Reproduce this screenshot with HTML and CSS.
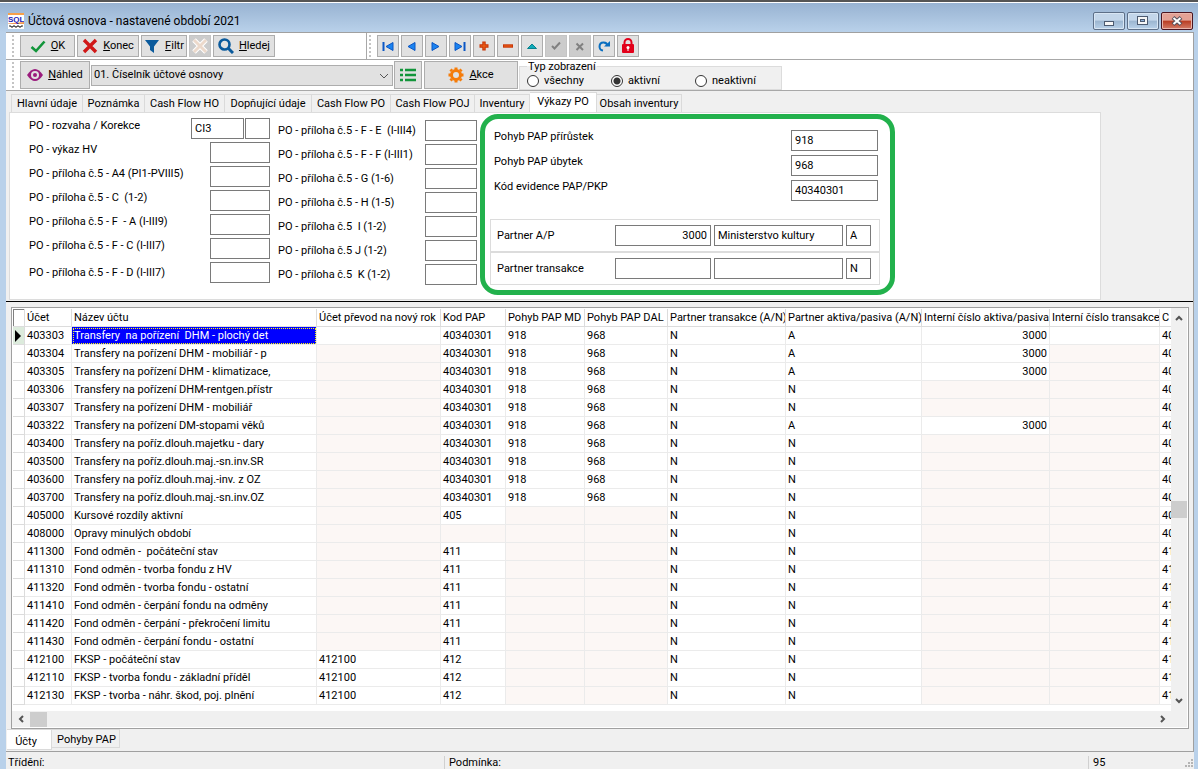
FILE: index.html
```html
<!DOCTYPE html>
<html lang="cs">
<head>
<meta charset="utf-8">
<title>Účtová osnova</title>
<link rel="stylesheet" href="styles.css">
</head>
<body>
<div class="window">
<header class="titlebar">
  <svg class="logo" viewBox="0 0 16 16"><rect width="16" height="16" fill="#fff"/><rect width="16" height="2" fill="#f6a04a"/><path d="M0 10.500L16 9V11H0Z" fill="#f29a50"/><text x="0" y="9" font-size="8" font-weight="bold" fill="#1b1bb5">SQL</text><path d="M1 13h2v1h2v-1h2v1h2v-1h2v1h2v-1h2" stroke="#222" fill="none"/></svg>
  <h1 class="title">Účtová osnova - nastavené období 2021</h1>
  <div class="winbuttons">
    <button class="winbtn" aria-label="Minimalizovat"><svg width="12" height="12"><rect x="1.500" y="6.500" width="9" height="4" fill="#f6f6f6" stroke="#4c5a70"/></svg></button>
    <button class="winbtn" aria-label="Maximalizovat"><svg width="12" height="12"><rect x=".5" y="1.500" width="10" height="8" fill="#f6f6f6" stroke="#4c5a70"/><rect x="3.500" y="4.500" width="4" height="2" fill="#8fb0d8" stroke="#4c5a70"/></svg></button>
    <button class="winbtn winbtn-close" aria-label="Zavřít"><svg width="12" height="12"><path d="M2 2.500L10 9.500M10 2.500L2 9.500" stroke="#55505c" stroke-width="4"/><path d="M2.500 3L9.500 9M9.500 3L2.500 9" stroke="#fff" stroke-width="2"/></svg></button>
  </div>
</header>

<main class="client">
<div class="toolbar toolbar-main">
  <div class="band band-actions">
    <span class="grip"></span>
    <button class="btn btn-ok"><svg width="16" height="16"><path d="M1.500 9L6 13L14.500 3.500" fill="none" stroke="#12953a" stroke-width="2.600"/></svg><span><u>O</u>K</span></button>
    <button class="btn btn-konec"><svg width="16" height="16"><path d="M2 2L14 14M14 2L2 14" stroke="#d01818" stroke-width="3.400"/></svg><span><u>K</u>onec</span></button>
    <button class="btn btn-filtr"><svg width="16" height="16"><path d="M1 2H15L10 8.500V15L6 12V8.500Z" fill="#0a5a9c"/></svg><span><u>F</u>iltr</span></button>
    <button class="btn btn-clear" disabled aria-label="Zrušit filtr"><svg width="16" height="16"><path d="M2 2L14 14M14 2L2 14" stroke="#fff" stroke-width="5"/><path d="M2 2L14 14M14 2L2 14" stroke="#ecd9cb" stroke-width="3"/></svg></button>
    <button class="btn btn-hledej"><svg width="16" height="16"><circle cx="6.500" cy="6.500" r="5" fill="none" stroke="#0a5a9c" stroke-width="2.600"/><path d="M10.500 10.500L15 15" stroke="#0a5a9c" stroke-width="3"/></svg><span><u>H</u>ledej</span></button>
  </div>
  <div class="band band-nav">
    <span class="grip"></span>
    <button class="btn nav" aria-label="První"><svg width="14" height="14"><path d="M2.500 3V12" stroke="#0b56c4" stroke-width="2"/><path d="M12 3.500V11.500L5 7.500Z" fill="#1b83f0" stroke="#0b56c4"/></svg></button>
    <button class="btn nav" aria-label="Předchozí"><svg width="14" height="14"><path d="M10 3.500V11.500L3 7.500Z" fill="#1b83f0" stroke="#0b56c4"/></svg></button>
    <button class="btn nav" aria-label="Další"><svg width="14" height="14"><path d="M3 3.500V11.500L10 7.500Z" fill="#1b83f0" stroke="#0b56c4"/></svg></button>
    <button class="btn nav" aria-label="Poslední"><svg width="14" height="14"><path d="M11.500 3V12" stroke="#0b56c4" stroke-width="2"/><path d="M2 3.500V11.500L9 7.500Z" fill="#1b83f0" stroke="#0b56c4"/></svg></button>
    <button class="btn nav" aria-label="Přidat"><svg width="14" height="14"><path d="M7 2.500V11.500M2.500 7H11.500" stroke="#c93404" stroke-width="3.400"/><path d="M7 3.500V10.500M3.500 7H10.500" stroke="#f0661c"/></svg></button>
    <button class="btn nav" aria-label="Smazat"><svg width="14" height="14"><path d="M2 7H12" stroke="#c93404" stroke-width="3.400"/><path d="M3 7H11" stroke="#f0661c"/></svg></button>
    <button class="btn nav" aria-label="Upravit"><svg width="14" height="14"><path d="M7 5L11.500 9.500H2.500Z" fill="#10aab8" stroke="#08828f"/></svg></button>
    <button class="btn nav" disabled aria-label="Uložit"><svg width="14" height="14"><path d="M3 7L5.500 9.500L11 3.500" fill="none" stroke="#808080" stroke-width="2"/></svg></button>
    <button class="btn nav" disabled aria-label="Storno"><svg width="14" height="14"><path d="M3.500 4.500L10 11M10 4.500L3.500 11" stroke="#808080" stroke-width="2"/></svg></button>
    <button class="btn nav" aria-label="Obnovit"><svg width="14" height="14"><path d="M6 11.500A4 4 0 1 1 10.500 7" fill="none" stroke="#0b6fc0" stroke-width="2"/><path d="M7 7.500H13V2Z" fill="#0b6fc0"/></svg></button>
    <button class="btn nav" aria-label="Zamknout"><svg width="16" height="18"><path d="M4.500 8V5.500a3.500 3.500 0 0 1 7 0V8" fill="none" stroke="#e2001a" stroke-width="2"/><rect x="2" y="7" width="12" height="9" rx="1" fill="#e2001a"/><circle cx="8" cy="10.500" r="1.500" fill="#fff"/><path d="M8 11V14" stroke="#fff"/></svg></button>
  </div>
</div>

<div class="toolbar toolbar-view">
  <span class="grip"></span>
  <button class="btn btn-nahled"><svg width="16" height="16"><path d="M0 8Q8-4 16 8Q8 20 0 8Z" fill="#9b1b7d"/><circle cx="8" cy="8" r="4" fill="#e1e1e1"/><circle cx="8" cy="8" r="2" fill="#9b1b7d"/></svg><span><u>N</u>áhled</span></button>
  <div class="combo">
    <select class="combo-select" aria-label="Sestava"><option>01. Číselník účtové osnovy</option></select>
    <svg class="combo-arrow" width="10" height="6"><path d="M1 1L5 5L9 1" fill="none" stroke="#555"/></svg>
  </div>
  <button class="btn btn-list" aria-label="Seznam"><svg width="16" height="14"><path d="M0 2H3M5 2H16M0 7H3M5 7H16M0 12H3M5 12H16" stroke="#12953a" stroke-width="2.400"/></svg></button>
  <button class="btn btn-akce"><svg width="16" height="16" viewBox="-8 -8 16 16"><circle r="4.500" fill="none" stroke="#f57c0a" stroke-width="3"/><path d="M0-7.500V-5M0 7.500V5M-7.500 0H-5M7.500 0H5M-5.500-5.500L-4-4M5.500 5.500L4 4M-5.500 5.500L-4 4M5.500-5.500L4-4" stroke="#f57c0a" stroke-width="3"/></svg><span><u>A</u>kce</span></button>
  <fieldset class="view-type">
    <legend>Typ zobrazení</legend>
    <label><input type="radio" name="typ">všechny</label>
    <label><input type="radio" name="typ" checked>aktivní</label>
    <label><input type="radio" name="typ">neaktivní</label>
  </fieldset>
</div>

<nav class="tabs">
  <button class="tab tab-1">Hlavní údaje</button><button class="tab tab-2">Poznámka</button><button class="tab tab-3">Cash Flow HO</button><button class="tab tab-4">Dopňující údaje</button><button class="tab tab-5">Cash Flow PO</button><button class="tab tab-6">Cash Flow POJ</button><button class="tab tab-7">Inventury</button><button class="tab tab-8 active">Výkazy PO</button><button class="tab tab-9">Obsah inventury</button>
</nav>

<section class="page">
  <div class="fields fields-left">
    <div class="field"><label for="l1">PO - rozvaha / Korekce</label><span class="pair"><input id="l1" value="CI3"><input aria-label="Korekce"></span></div>
    <div class="field"><label for="l2">PO - výkaz HV</label><input id="l2"></div>
    <div class="field"><label for="l3">PO - příloha č.5 - A4 (PI1-PVIII5)</label><input id="l3"></div>
    <div class="field"><label for="l4">PO - příloha č.5 - C&nbsp; (1-2)</label><input id="l4"></div>
    <div class="field"><label for="l5">PO - příloha č.5 - F&nbsp; - A (I-III9)</label><input id="l5"></div>
    <div class="field"><label for="l6">PO - příloha č.5 - F - C (I-III7)</label><input id="l6"></div>
    <div class="field field-last"><label for="l7">PO - příloha č.5 - F - D (I-III7)</label><input id="l7"></div>
  </div>
  <div class="fields fields-mid">
    <div class="field"><label for="m1">PO - příloha č.5 - F - E&nbsp; (I-III4)</label><input id="m1"></div>
    <div class="field"><label for="m2">PO - příloha č.5 - F - F (I-III1)</label><input id="m2"></div>
    <div class="field"><label for="m3">PO - příloha č.5 - G (1-6)</label><input id="m3"></div>
    <div class="field"><label for="m4">PO - příloha č.5 - H (1-5)</label><input id="m4"></div>
    <div class="field"><label for="m5">PO - příloha č.5&nbsp; I (1-2)</label><input id="m5"></div>
    <div class="field"><label for="m6">PO - příloha č.5 J (1-2)</label><input id="m6"></div>
    <div class="field"><label for="m7">PO - příloha č.5&nbsp; K (1-2)</label><input id="m7"></div>
  </div>
  <div class="pap">
    <div class="pap-fields">
      <div class="field"><label for="p1">Pohyb PAP přírůstek</label><input id="p1" value="918"></div>
      <div class="field"><label for="p2">Pohyb PAP úbytek</label><input id="p2" value="968"></div>
      <div class="field"><label for="p3">Kód evidence PAP/PKP</label><input id="p3" value="40340301"></div>
    </div>
    <div class="partner"><label for="a1">Partner A/P</label><input class="num" id="a1" value="3000"><input aria-label="Název partnera" value="Ministerstvo kultury"><input aria-label="Příznak A/P" value="A"></div>
    <div class="partner"><label for="t1">Partner transakce</label><input class="num" id="t1"><input aria-label="Název partnera transakce"><input aria-label="Příznak transakce" value="N"></div>
  </div>
</section>

<section class="grid">
  <div class="grid-view">
  <table class="accounts">
    <colgroup><col class="c0"><col class="c1"><col class="c2"><col class="c3"><col class="c4"><col class="c5"><col class="c6"><col class="c7"><col class="c8"><col class="c9"><col class="c10"><col class="c11"></colgroup>
    <thead><tr><th></th><th>Účet</th><th>Název účtu</th><th>Účet převod na nový rok</th><th>Kod PAP</th><th>Pohyb PAP MD</th><th>Pohyb PAP DAL</th><th>Partner transakce (A/N)</th><th>Partner aktiva/pasiva (A/N)</th><th>Interní číslo aktiva/pasiva</th><th>Interní číslo transakce</th><th>C</th></tr></thead>
    <tbody>
    <tr class="current"><td><svg width="6" height="12"><path d="M0 0L6 6L0 12Z"/></svg></td><td>403303</td><td>Transfery&nbsp; na pořízení&nbsp; DHM - plochý det</td><td></td><td>40340301</td><td>918</td><td>968</td><td>N</td><td>A</td><td>3000</td><td></td><td>40</td></tr>
    <tr><td></td><td>403304</td><td>Transfery na pořízení DHM - mobiliář - p</td><td></td><td>40340301</td><td>918</td><td>968</td><td>N</td><td>A</td><td>3000</td><td></td><td>40</td></tr>
    <tr><td></td><td>403305</td><td>Transfery na pořízení DHM - klimatizace,</td><td></td><td>40340301</td><td>918</td><td>968</td><td>N</td><td>A</td><td>3000</td><td></td><td>40</td></tr>
    <tr><td></td><td>403306</td><td>Transfery na pořízení DHM-rentgen.přístr</td><td></td><td>40340301</td><td>918</td><td>968</td><td>N</td><td>N</td><td></td><td></td><td>40</td></tr>
    <tr><td></td><td>403307</td><td>Transfery na pořízení DHM - mobiliář</td><td></td><td>40340301</td><td>918</td><td>968</td><td>N</td><td>N</td><td></td><td></td><td>40</td></tr>
    <tr><td></td><td>403322</td><td>Transfery na pořízení DM-stopami věků</td><td></td><td>40340301</td><td>918</td><td>968</td><td>N</td><td>A</td><td>3000</td><td></td><td>40</td></tr>
    <tr><td></td><td>403400</td><td>Transfery na poříz.dlouh.majetku - dary</td><td></td><td>40340301</td><td>918</td><td>968</td><td>N</td><td>N</td><td></td><td></td><td>40</td></tr>
    <tr><td></td><td>403500</td><td>Transfery na poříz.dlouh.maj.-sn.inv.SR</td><td></td><td>40340301</td><td>918</td><td>968</td><td>N</td><td>N</td><td></td><td></td><td>40</td></tr>
    <tr><td></td><td>403600</td><td>Transfery na poříz.dlouh.maj.-inv. z OZ</td><td></td><td>40340301</td><td>918</td><td>968</td><td>N</td><td>N</td><td></td><td></td><td>40</td></tr>
    <tr><td></td><td>403700</td><td>Transfery na poříz.dlouh.maj.-sn.inv.OZ</td><td></td><td>40340301</td><td>918</td><td>968</td><td>N</td><td>N</td><td></td><td></td><td>40</td></tr>
    <tr><td></td><td>405000</td><td>Kursové rozdíly aktivní</td><td></td><td>405</td><td></td><td></td><td>N</td><td>N</td><td></td><td></td><td>40</td></tr>
    <tr><td></td><td>408000</td><td>Opravy minulých období</td><td></td><td></td><td></td><td></td><td>N</td><td>N</td><td></td><td></td><td>40</td></tr>
    <tr><td></td><td>411300</td><td>Fond odměn -&nbsp; počáteční stav</td><td></td><td>411</td><td></td><td></td><td>N</td><td>N</td><td></td><td></td><td>41</td></tr>
    <tr><td></td><td>411310</td><td>Fond odměn - tvorba fondu z HV</td><td></td><td>411</td><td></td><td></td><td>N</td><td>N</td><td></td><td></td><td>41</td></tr>
    <tr><td></td><td>411320</td><td>Fond odměn - tvorba fondu - ostatní</td><td></td><td>411</td><td></td><td></td><td>N</td><td>N</td><td></td><td></td><td>41</td></tr>
    <tr><td></td><td>411410</td><td>Fond odměn - čerpání fondu na odměny</td><td></td><td>411</td><td></td><td></td><td>N</td><td>N</td><td></td><td></td><td>41</td></tr>
    <tr><td></td><td>411420</td><td>Fond odměn - čerpání - překročení limitu</td><td></td><td>411</td><td></td><td></td><td>N</td><td>N</td><td></td><td></td><td>41</td></tr>
    <tr><td></td><td>411430</td><td>Fond odměn - čerpání fondu - ostatní</td><td></td><td>411</td><td></td><td></td><td>N</td><td>N</td><td></td><td></td><td>41</td></tr>
    <tr><td></td><td>412100</td><td>FKSP - počáteční stav</td><td>412100</td><td>412</td><td></td><td></td><td>N</td><td>N</td><td></td><td></td><td>41</td></tr>
    <tr><td></td><td>412110</td><td>FKSP - tvorba fondu - základní příděl</td><td>412100</td><td>412</td><td></td><td></td><td>N</td><td>N</td><td></td><td></td><td>41</td></tr>
    <tr><td></td><td>412130</td><td>FKSP - tvorba - náhr. škod, poj. plnění</td><td>412100</td><td>412</td><td></td><td></td><td>N</td><td>N</td><td></td><td></td><td>41</td></tr>
    </tbody>
  </table>
  </div>
  <div class="vscroll"><svg width="8" height="6"><path d="M1 5L4 2L7 5" fill="none" stroke="#555" stroke-width="2"/></svg><span class="vspace"></span><span class="thumb"></span><span class="vrest"></span><svg width="8" height="6"><path d="M1 1L4 4L7 1" fill="none" stroke="#555" stroke-width="2"/></svg></div>
  <div class="hscroll"><svg width="6" height="8"><path d="M5 1L2 4L5 7" fill="none" stroke="#555" stroke-width="2"/></svg><span class="thumb"></span><span class="hrest"></span><svg width="6" height="8"><path d="M1 1L4 4L1 7" fill="none" stroke="#555" stroke-width="2"/></svg></div>
</section>

<nav class="bottom-tabs"><button class="btab active">Účty</button><button class="btab">Pohyby PAP</button></nav>
</main>

<footer class="status"><span class="st-sort">Třídění:</span><span class="st-cond">Podmínka:</span><span class="st-count">95</span>
  <svg class="sizer" width="10" height="10"><path d="M7 1h2M4 4h2M7 4h2M1 7h2M4 7h2M7 7h2" stroke="#b4b4b4" stroke-width="2"/></svg></footer>
</div>
</body>
</html>
```
FILE: styles.css
```css
* { box-sizing: border-box; }

body {
  margin: 0;
  height: 100vh;
  overflow: hidden;
  background: #b9d1ea;
  color: #000;
  font: 11px/14px Roboto, "Liberation Sans", sans-serif;
}

button, input, select, legend, fieldset { font: inherit; color: inherit; }
button { padding: 0; }
svg { display: block; flex: none; }

.window {
  display: flex;
  flex-direction: column;
  height: 100vh;
  padding: 0 4px 0 6px;
  border-top: 2px solid #555;
}

/* Title bar */
.titlebar {
  display: flex;
  align-items: center;
  height: 30px;
  flex: none;
  margin: 0 -4px 0 -6px;
  padding: 6px 5px 0 8px;
  border-top: 1px solid #fff;
  background: linear-gradient(#98b3d2, #b9d1ea);
}
.logo { width: 16px; height: 16px; font-family: "Liberation Sans", sans-serif; }
.title {
  flex: 1;
  margin: 0 0 0 4px;
  font: 12px/16px Roboto, "Noto Sans", sans-serif;
}
.winbuttons { display: flex; gap: 2px; }
.winbtn {
  display: flex;
  align-items: center;
  justify-content: center;
  width: 32px;
  height: 18px;
  border: 1px solid #5d6f88;
  border-radius: 2px;
  background: linear-gradient(#c3d6ea 45%, #9bb5d0 50%, #b9d1ea);
  box-shadow: inset 0 0 0 1px #d8e6f4;
}
.winbtn-close {
  border-color: #4a1420;
  background: linear-gradient(#e3a195 45%, #b93c22 50%, #d47c68);
  box-shadow: inset 0 0 0 1px #e9b5ab;
}

/* Toolbars */
.client {
  display: flex;
  flex-direction: column;
  flex: 1;
  min-height: 0;
  background: #f0f0f0;
  border-top: 1px solid #a0a0a0;
  border-right: 1px solid #a0a0a0;
}
.toolbar { display: flex; flex: none; background: #fff; border-bottom: 1px solid #a8a8a8; }
.toolbar-main { height: 27px; }
.band { display: flex; align-items: center; gap: 2px; }
.band-actions { width: 361px; border-right: 1px solid #a8a8a8; }
.band-nav { margin-left: 1px; }
.grip {
  width: 2px;
  height: 22px;
  margin: 0 4px 0 6px;
  background: repeating-linear-gradient(#c4c4c4 0 2px, #fff 2px 4px);
}
.band-nav .grip { margin: 0 4px 0 1px; }
.btn {
  display: flex;
  align-items: center;
  justify-content: center;
  gap: 5px;
  height: 22px;
  border: 1px solid #adadad;
  background: #e1e1e1;
}
.btn:disabled { background: #ccc; border-color: #c4c4c4; }
.btn-ok { width: 55px; }
.btn-konec { width: 62px; }
.btn-filtr { width: 46px; }
.btn-clear { width: 22px; }
.btn-hledej { width: 62px; }
.nav { width: 22px; }

.toolbar-view { height: 31px; align-items: center; }
.toolbar-view .grip { height: 26px; margin-right: 6px; }
.toolbar-view .btn { height: 28px; }
.btn-nahled { width: 70px; }
.combo { position: relative; flex: none; width: 302px; margin: 0 1px; }
.combo-select {
  width: 100%;
  height: 21px;
  padding: 0 2px;
  appearance: none;
  border: 1px solid #adadad;
  border-radius: 0;
  background: #e1e1e1;
}
.combo-arrow { position: absolute; right: 4px; top: 8px; }
.btn-list { width: 28px; margin-right: 2px; }
.btn-akce { width: 94px; margin-right: 1px; }
.view-type {
  display: flex;
  width: 263px;
  height: 29px;
  margin: 0;
  padding: 0 0 0 7px;
  border: 1px solid #dcdcdc;
  background: #f0f0f0;
}
.view-type legend { padding: 0 1px; line-height: 12px; }
.view-type label { display: flex; align-items: center; gap: 5px; width: 84px; height: 16px; }
.view-type input {
  appearance: none;
  width: 12px;
  height: 12px;
  margin: 0;
  border: 1px solid #333;
  border-radius: 50%;
  background: #fff;
}
.view-type input:checked { background: radial-gradient(#333 0 3px, #fff 4px); }

/* Page tabs */
.tabs { display: flex; align-items: flex-end; flex: none; height: 21px; padding-left: 5px; }
.tab {
  height: 18px;
  border: 1px solid #dadada;
  border-width: 1px 1px 0 0;
  background: #f0f0f0;
  white-space: nowrap;
}
.tab-1 { width: 72px; border-left-width: 1px; }
.tab-2 { width: 62px; }
.tab-3 { width: 80px; }
.tab-4 { width: 87px; }
.tab-5 { width: 79px; }
.tab-6 { width: 84px; }
.tab-7 { width: 55px; }
.tab-8 { width: 67px; }
.tab-9 { width: 85px; }
.tab.active { height: 20px; background: #fff; padding-bottom: 2px; }

/* Form page */
.page {
  display: flex;
  align-items: flex-start;
  flex: none;
  width: 1092px;
  max-width: 100%;
  height: 188px;
  margin-left: 3px;
  padding-left: 19px;
  border: 1px solid #dcdcdc;
  background: #fff;
}
.page input {
  height: 21px;
  min-width: 0;
  padding: 0 3px;
  border: 1px solid #7a7a7a;
  background: #fff;
}
.field { display: flex; justify-content: space-between; align-items: center; white-space: nowrap; }
.fields { display: grid; grid-auto-rows: 21px; row-gap: 3px; }
.fields-left { width: 241px; margin: 5px 8px 0 0; }
.fields-left .field { align-items: flex-start; }
.fields-left .field-last { align-items: center; }
.fields-left input { width: 60px; }
.fields-left label { padding-top: 1px; }
.pair { display: flex; gap: 1px; }
.pair input:first-child { width: 53px; }
.pair input:last-child { width: 25px; }
.fields-mid { width: 199px; margin: 7px 3px 0 0; }
.fields-mid input { width: 52px; }

.pap {
  width: 415px;
  height: 181px;
  margin-top: 1px;
  padding: 11px 10px 0 5px;
  border: 5px solid #22b14c;
  border-radius: 18px;
}
.pap-fields { display: grid; row-gap: 4px; height: 89px; align-content: start; padding: 0 2px 0 4px; }
.pap-fields .field { align-items: flex-start; }
.pap-fields input { width: 87px; }
.partner {
  display: grid;
  grid-template-columns: 115px 96px 129px 25px;
  column-gap: 3px;
  align-items: center;
  height: 33px;
  padding-left: 6px;
  border: 1px solid #dcdcdc;
}
.num { text-align: right; }

/* Account grid */
.grid {
  position: relative;
  display: grid;
  grid-template-columns: minmax(0, 1fr) 16px;
  flex: none;
  margin: 7px 4px 0 5px;
  padding-right: 1px;
  border: 1px solid #a0a0a0;
  background: #fff;
}
.grid::before {
  content: "";
  position: absolute;
  left: -6px;
  right: -5px;
  top: -7px;
  height: 1px;
  background: #000;
}
.grid-view { overflow: hidden; height: 403px; padding: 1px 0 0 1px; }
.accounts { table-layout: fixed; width: 1200px; border-collapse: separate; border-spacing: 0; }
.c0 { width: 12px; }
.c1 { width: 47px; }
.c2 { width: 245px; }
.c3 { width: 124px; }
.c4 { width: 65px; }
.c5 { width: 79px; }
.c6 { width: 83px; }
.c7 { width: 118px; }
.c8 { width: 136px; }
.c9 { width: 128px; }
.c10 { width: 110px; }
.c11 { width: 53px; }
.accounts th, .accounts td {
  height: 18px;
  padding: 0 0 0 2px;
  border: 1px solid #ebebeb;
  border-width: 0 1px 1px 0;
  font-weight: normal;
  text-align: left;
  line-height: 17px;
  white-space: nowrap;
  overflow: hidden;
}
.accounts th { border-color: #dcdcdc; }
.accounts th:first-child { box-shadow: inset 1px 1px #808080; }
.accounts td:empty { background: #fcf7f5; }
.accounts td:first-child { background: #fff; border-color: #dcdcdc; }
.accounts .current td { background: #fff; }
.accounts .current td:first-child { background: #dcebdc; }
.accounts .current td:nth-child(3) {
  background: #00f;
  color: #fff;
  outline: 1px dotted #ff0;
  outline-offset: -2px;
}
.accounts td:nth-child(10) { text-align: right; padding-right: 2px; }
.vscroll {
  display: flex;
  flex-direction: column;
  align-items: center;
  padding: 7px 0;
  background: #f0f0f0;
}
.thumb { background: #cdcdcd; flex: none; }
.vscroll .thumb { width: 16px; height: 17px; }
.vspace, .vrest { flex: 1; }
.hscroll {
  grid-column: 1 / -1;
  display: flex;
  align-items: center;
  height: 16px;
  margin-bottom: 1px;
  padding: 0 21px 0 6px;
  background: #f0f0f0;
}
.hscroll .thumb { width: 17px; height: 15px; margin-left: 6px; }
.hrest { flex: 1; }

/* Bottom */
.bottom-tabs { display: flex; align-items: flex-start; flex: 1; padding-left: 1px; border-bottom: 1px solid #a0a0a0; }
.btab { width: 68px; height: 19px; padding: 2px 0 0 2px; border: 1px solid #dadada; border-left: 0; background: #f0f0f0; }
.btab.active { width: 45px; height: 21px; padding: 4px 6px 0 0; background: #fff; }
.status {
  display: flex;
  align-items: center;
  flex: none;
  height: 17px;
  padding: 4px 0 0 2px;
  background: #f0f0f0;
}
.st-sort { width: 437px; border-right: 1px solid #d0d0d0; }
.st-cond { flex: 1; padding-left: 4px; }
.st-count { width: 96px; padding-left: 4px; border-left: 1px solid #d0d0d0; }
.sizer { align-self: flex-end; }
```
